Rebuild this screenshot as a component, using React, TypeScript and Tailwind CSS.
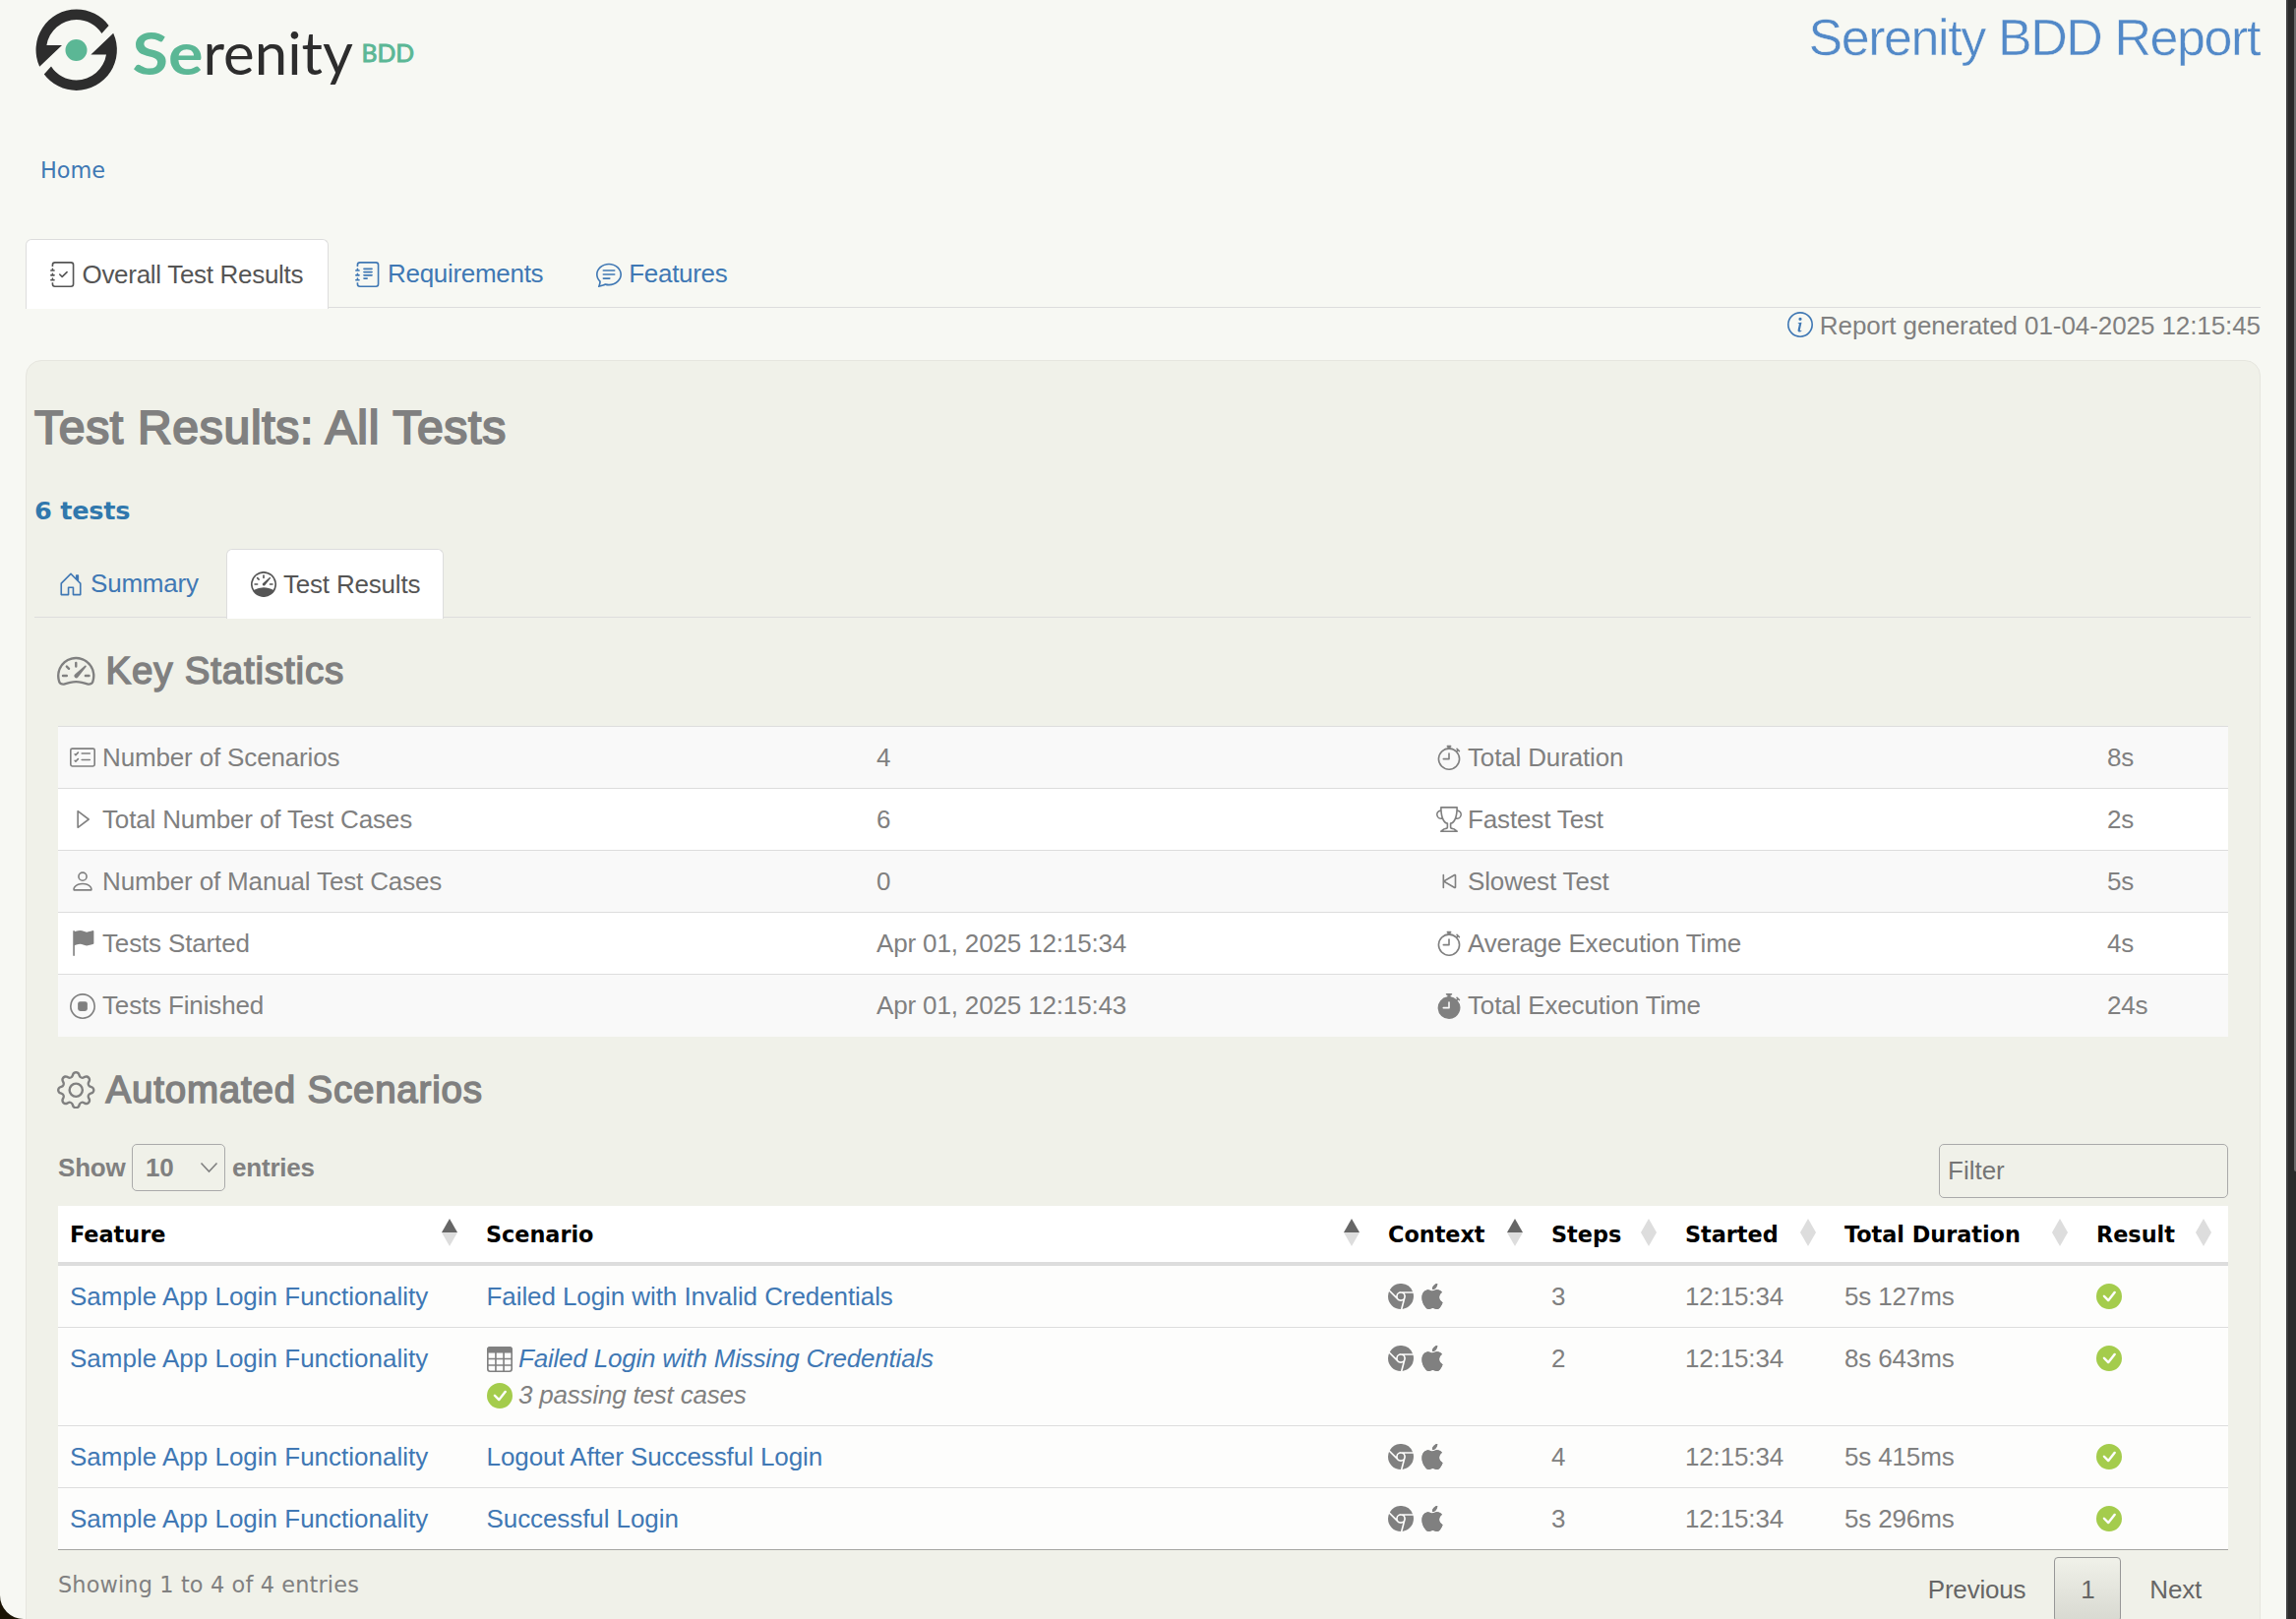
import React from "react";
import {
  BsJournalCheck, BsJournalText, BsChatText, BsInfoCircle, BsHouseDoor, BsSpeedometer, BsSpeedometer2,
  BsCardChecklist, BsPerson, BsFlagFill, BsStopCircle, BsStopwatch, BsTrophy, BsSkipStart,
  BsStopwatchFill, BsGear, BsCheckCircleFill, BsBrowserChrome, BsApple,
} from "react-icons/bs";

function PlayOutline() {
  return (
    <svg width="1em" height="1em" viewBox="0 0 16 16" fill="none" stroke="currentColor" strokeLinejoin="round">
      <path d="M5 2.9V13.1L11.8 8Z" />
    </svg>
  );
}

function TableGrid() {
  return (
    <svg width="1em" height="1em" viewBox="0 0 16 16" fill="none" stroke="currentColor">
      <rect x="0.5" y="0.5" width="15" height="15" rx="1.5" />
      <path d="M0.5 3.5V2A1.5 1.5 0 0 1 2 0.5H14A1.5 1.5 0 0 1 15.5 2V3.5Z" fill="currentColor" />
      <path d="M5.5 3.5V15.5M10.5 3.5V15.5M0.5 7.7H15.5M0.5 11.7H15.5" />
    </svg>
  );
}

const stats: [React.ElementType, string, string, React.ElementType, string, string][] = [
  [BsCardChecklist, "Number of Scenarios", "4", BsStopwatch, "Total Duration", "8s"],
  [PlayOutline, "Total Number of Test Cases", "6", BsTrophy, "Fastest Test", "2s"],
  [BsPerson, "Number of Manual Test Cases", "0", BsSkipStart, "Slowest Test", "5s"],
  [BsFlagFill, "Tests Started", "Apr 01, 2025 12:15:34", BsStopwatch, "Average Execution Time", "4s"],
  [BsStopCircle, "Tests Finished", "Apr 01, 2025 12:15:43", BsStopwatchFill, "Total Execution Time", "24s"],
];

const scenarios = [
  { name: "Failed Login with Invalid Credentials", steps: 3, duration: "5s 127ms" },
  { name: "Failed Login with Missing Credentials", steps: 2, duration: "8s 643ms", cases: "3 passing test cases" },
  { name: "Logout After Successful Login", steps: 4, duration: "5s 415ms" },
  { name: "Successful Login", steps: 3, duration: "5s 296ms" },
];

const headers: [string, boolean][] = [
  ["Feature", true], ["Scenario", true], ["Context", true], ["Steps", false],
  ["Started", false], ["Total Duration", false], ["Result", false],
];

const columns = "grid grid-cols-[423px_917px_166px_136px_162px_256px_146px]";

function Logo() {
  return (
    <svg className="block" width="400" height="100" viewBox="0 0 400 100">
      <g fill="#2d2d2d">
        <path d="M14.2 67.7A41.2 41.2 0 0 1 51.7 9.5A41.2 41.2 0 0 1 84.6 25.9L77.4 34A30.7 30.7 0 0 0 51.7 20A30.7 30.7 0 0 0 21.4 46H37Z" />
        <path d="M89.2 33.7A41.2 41.2 0 0 1 51.7 91.9A41.2 41.2 0 0 1 18.8 75.5L26 67.4A30.7 30.7 0 0 0 51.7 81.4A30.7 30.7 0 0 0 82 55.4H66.4Z" />
      </g>
      <circle cx="51.5" cy="51" r="11" fill="#5bb795" />
      <g fontFamily="Lato, sans-serif">
        <text x="108.5" y="76.3" fontSize="60" fontWeight="700" fill="#5bb795" textLength="72" lengthAdjust="spacingAndGlyphs">Se</text>
        <text x="180.5" y="76.3" fontSize="60" fill="#2d2d2d" textLength="152.5" lengthAdjust="spacingAndGlyphs">renity</text>
        <text x="341.5" y="63.4" fontSize="24.5" fill="#5bb795" stroke="#5bb795" strokeWidth="0.9" textLength="53.5" lengthAdjust="spacingAndGlyphs">BDD</text>
      </g>
    </svg>
  );
}

function Sort({ active }: { active: boolean }) {
  return (
    <svg className="mb-[4px]" width="16" height="28" viewBox="0 0 16 28">
      <path d="M8 0L16 14H0Z" fill={active ? "#666666" : "#dddddd"} />
      <path d="M8 28L16 14H0Z" fill="#dddddd" />
    </svg>
  );
}

export default function App() {
  return (
    <div className="h-[1646px] w-[2334px] overflow-hidden bg-[#1b1404] font-['Liberation_Sans',Arial,sans-serif] text-[26px] text-[#808080]">
      <div className="flex h-full">
        <main className="h-[1646px] w-[2324px] shrink-0 overflow-hidden rounded-bl-[24px] bg-[#f7f8f3] pr-[26px] pl-[26px]">
          <header className="flex h-[149px] items-start justify-between pr-px">
            <Logo />
            <h1 className="pt-[8px] text-[52px] leading-[60px] tracking-[-1.42px] text-[#5289c8] [-webkit-text-stroke:0.5px_#f7f8f3]">Serenity BDD Report</h1>
          </header>
          <nav className="flex h-[50px] items-center pl-[15px] font-['DejaVu_Sans',sans-serif] text-[22.4px] text-[#4078b4]">Home</nav>
          <div className="mt-[44px] flex h-[70px] border-b border-[#dddddd] tracking-[-0.3px]">
            <div className="-mb-[2px] flex h-[71px] w-[308px] items-center gap-[7px] rounded-t-[6px] border border-b-0 border-[#dddddd] bg-white pl-[23.5px] text-[#555555]">
              <BsJournalCheck className="shrink-0" />
              <span className="whitespace-nowrap">Overall Test Results</span>
            </div>
            <div className="flex items-center gap-[7px] pt-[2px] pl-[27px] text-[#4078b4]">
              <BsJournalText />
              <span>Requirements</span>
            </div>
            <div className="flex items-center gap-[7px] pt-[2px] pl-[54px] text-[#4078b4]">
              <BsChatText />
              <span>Features</span>
            </div>
          </div>
          <div className="flex h-[53px] items-start justify-end gap-[7px] pt-[2px]">
            <BsInfoCircle className="mt-[2px] text-[#4078b4]" />
            <span className="leading-[32px] tracking-[-0.08px]">Report generated 01-04-2025 12:15:45</span>
          </div>

          <section className="h-[1300px] rounded-t-[16px] border border-[#e6e6df] bg-[#f0f1e9] pr-[9px] pl-[8px]">
            <h2 className="mt-[38px] flex h-[60px] items-center text-[48px] tracking-[0.72px] [-webkit-text-stroke:2px_#808080]">Test Results: All Tests</h2>
            <div className="mt-[34px] flex h-[40px] items-center font-['DejaVu_Sans',sans-serif] text-[25.6px] font-bold tracking-[-0.25px] text-[#3178ad]">6 tests</div>
            <div className="mt-[19px] flex h-[70px] border-b border-[#dddddd] tracking-[-0.2px]">
              <div className="flex w-[195px] items-center gap-[7px] pt-[2px] pl-[24px] text-[#4078b4]">
                <BsHouseDoor />
                <span>Summary</span>
              </div>
              <div className="-mb-[2px] flex h-[71px] w-[221px] items-center gap-[7px] rounded-t-[6px] border border-b-0 border-[#dddddd] bg-white pl-[24px] text-[#555555]">
                <BsSpeedometer className="shrink-0" />
                <span className="whitespace-nowrap">Test Results</span>
              </div>
            </div>

            <div className="pr-[23px] pl-[24px]">
              <h3 className="mt-[29px] flex h-[50px] items-center gap-[11px] text-[38.5px] tracking-[0.82px]">
                <BsSpeedometer2 className="-ml-px" />
                <span className="[-webkit-text-stroke:1.5px_#808080]">Key Statistics</span>
              </h3>
              <div className="mt-[31px] pb-px">
                {stats.map(([IconA, a, av, IconB, b, bv], i) => (
                  <div key={a} className={`grid grid-cols-[832px_569px_682px_1fr] items-center border-t border-[#dddddd] tracking-[-0.15px] ${i % 2 ? "h-[63px] bg-white" : i === 4 ? "h-[64px] bg-[#f9f9f9]" : "h-[63px] bg-[#f9f9f9]"}`}>
                    <div className="flex items-center gap-[7px] pl-[12px]"><IconA /><span>{a}</span></div>
                    <div>{av}</div>
                    <div className="flex items-center gap-[6px]"><IconB /><span>{b}</span></div>
                    <div>{bv}</div>
                  </div>
                ))}
              </div>

              <h3 className="mt-[28px] flex h-[50px] items-center gap-[11px] text-[38.5px] tracking-[0.8px]">
                <BsGear className="-ml-px" />
                <span className="[-webkit-text-stroke:1.5px_#808080]">Automated Scenarios</span>
              </h3>
              <div className="mt-[30px] flex h-[63px] items-start justify-between">
                <div className="flex h-[48px] items-center font-bold tracking-[-0.2px]">
                  <span className="w-[75px]">Show</span>
                  <div className="flex h-[48px] w-[95px] items-center justify-between rounded-[5px] border border-[#aaaaaa] pr-[6px] pl-[13px]">
                    <span>10</span>
                    <svg width="19" height="12" viewBox="0 0 19 12" fill="none" stroke="#808080" strokeWidth="1.6"><path d="M1.5 1.5L9.5 10L17.5 1.5" /></svg>
                  </div>
                  <span className="pl-[7px]">entries</span>
                </div>
                <div className="flex h-[55px] w-[294px] items-center rounded-[5px] border border-[#aaaaaa] pl-[8px] text-[#757575]">Filter</div>
              </div>

              <div className="border-b border-[#a5a5a2]">
                <div className={`${columns} h-[61px] items-center border-b-4 border-[#dddddd] bg-white pt-[2px] font-['DejaVu_Sans',sans-serif] text-[22.4px] font-bold text-black`}>
                  {headers.map(([label, active]) => (
                    <div key={label} className="flex items-center justify-between pr-[17px] pl-[12px]">
                      <span className="whitespace-nowrap tracking-[-0.04px]">{label}</span>
                      <Sort active={active} />
                    </div>
                  ))}
                </div>
                {scenarios.map((s, i) => (
                  <div key={s.name} className={`${columns} ${s.cases ? "h-[100px]" : i === 0 ? "h-[62px]" : "h-[63px]"} bg-[#fdfdfc] pt-[13px] leading-[37px] tracking-[-0.15px] ${i ? "border-t border-[#dddddd]" : ""}`}>
                    <div className="pl-[12px] tracking-normal text-[#4078b4]">Sample App Login Functionality</div>
                    <div className={`pl-[12.5px] ${s.cases ? "italic tracking-[-0.2px]" : "tracking-[-0.08px]"}`}>
                      <div className="flex items-center gap-[6.5px]">
                        {s.cases && <TableGrid />}
                        <span className="text-[#4078b4]">{s.name}</span>
                      </div>
                      {s.cases && (
                        <div className="flex items-center gap-[6.5px]">
                          <BsCheckCircleFill className="text-[#a4cc4c]" />
                          <span>{s.cases}</span>
                        </div>
                      )}
                    </div>
                    <div className="flex h-[36px] items-center gap-[6px] pl-[12px]"><BsBrowserChrome /><BsApple /></div>
                    <div className="pl-[12px]">{s.steps}</div>
                    <div className="pl-[12px]">12:15:34</div>
                    <div className="pl-[12px]">{s.duration}</div>
                    <div className="flex h-[36px] items-center pl-[12px]"><BsCheckCircleFill className="text-[#a4cc4c]" /></div>
                  </div>
                ))}
              </div>

              <div className="flex justify-between">
                <div className="mt-[17px] h-[36px] font-['DejaVu_Sans',sans-serif] text-[22.4px] leading-[36px] tracking-[0.14px]">Showing 1 to 4 of 4 entries</div>
                <div className="mt-[7px] flex h-[66px] items-center tracking-[-0.2px] text-[#666666]">
                  <span>Previous</span>
                  <div className="mx-[29px] flex h-[66px] w-[68px] items-center justify-center rounded-[4px] border border-[#979797] bg-linear-to-b from-[#f0f1e9] to-[#d8d9d1]">1</div>
                  <span className="pr-[27px]">Next</span>
                </div>
              </div>
            </div>
          </section>
        </main>
        <div className="flex w-[10px] justify-end border-l-2 border-[#3d3d3d] bg-[#2b2b2b]">
          <div className="mt-[8px] h-[1183px] w-[2px] rounded-l-full bg-[#6b6b6b]" />
        </div>
      </div>
    </div>
  );
}
